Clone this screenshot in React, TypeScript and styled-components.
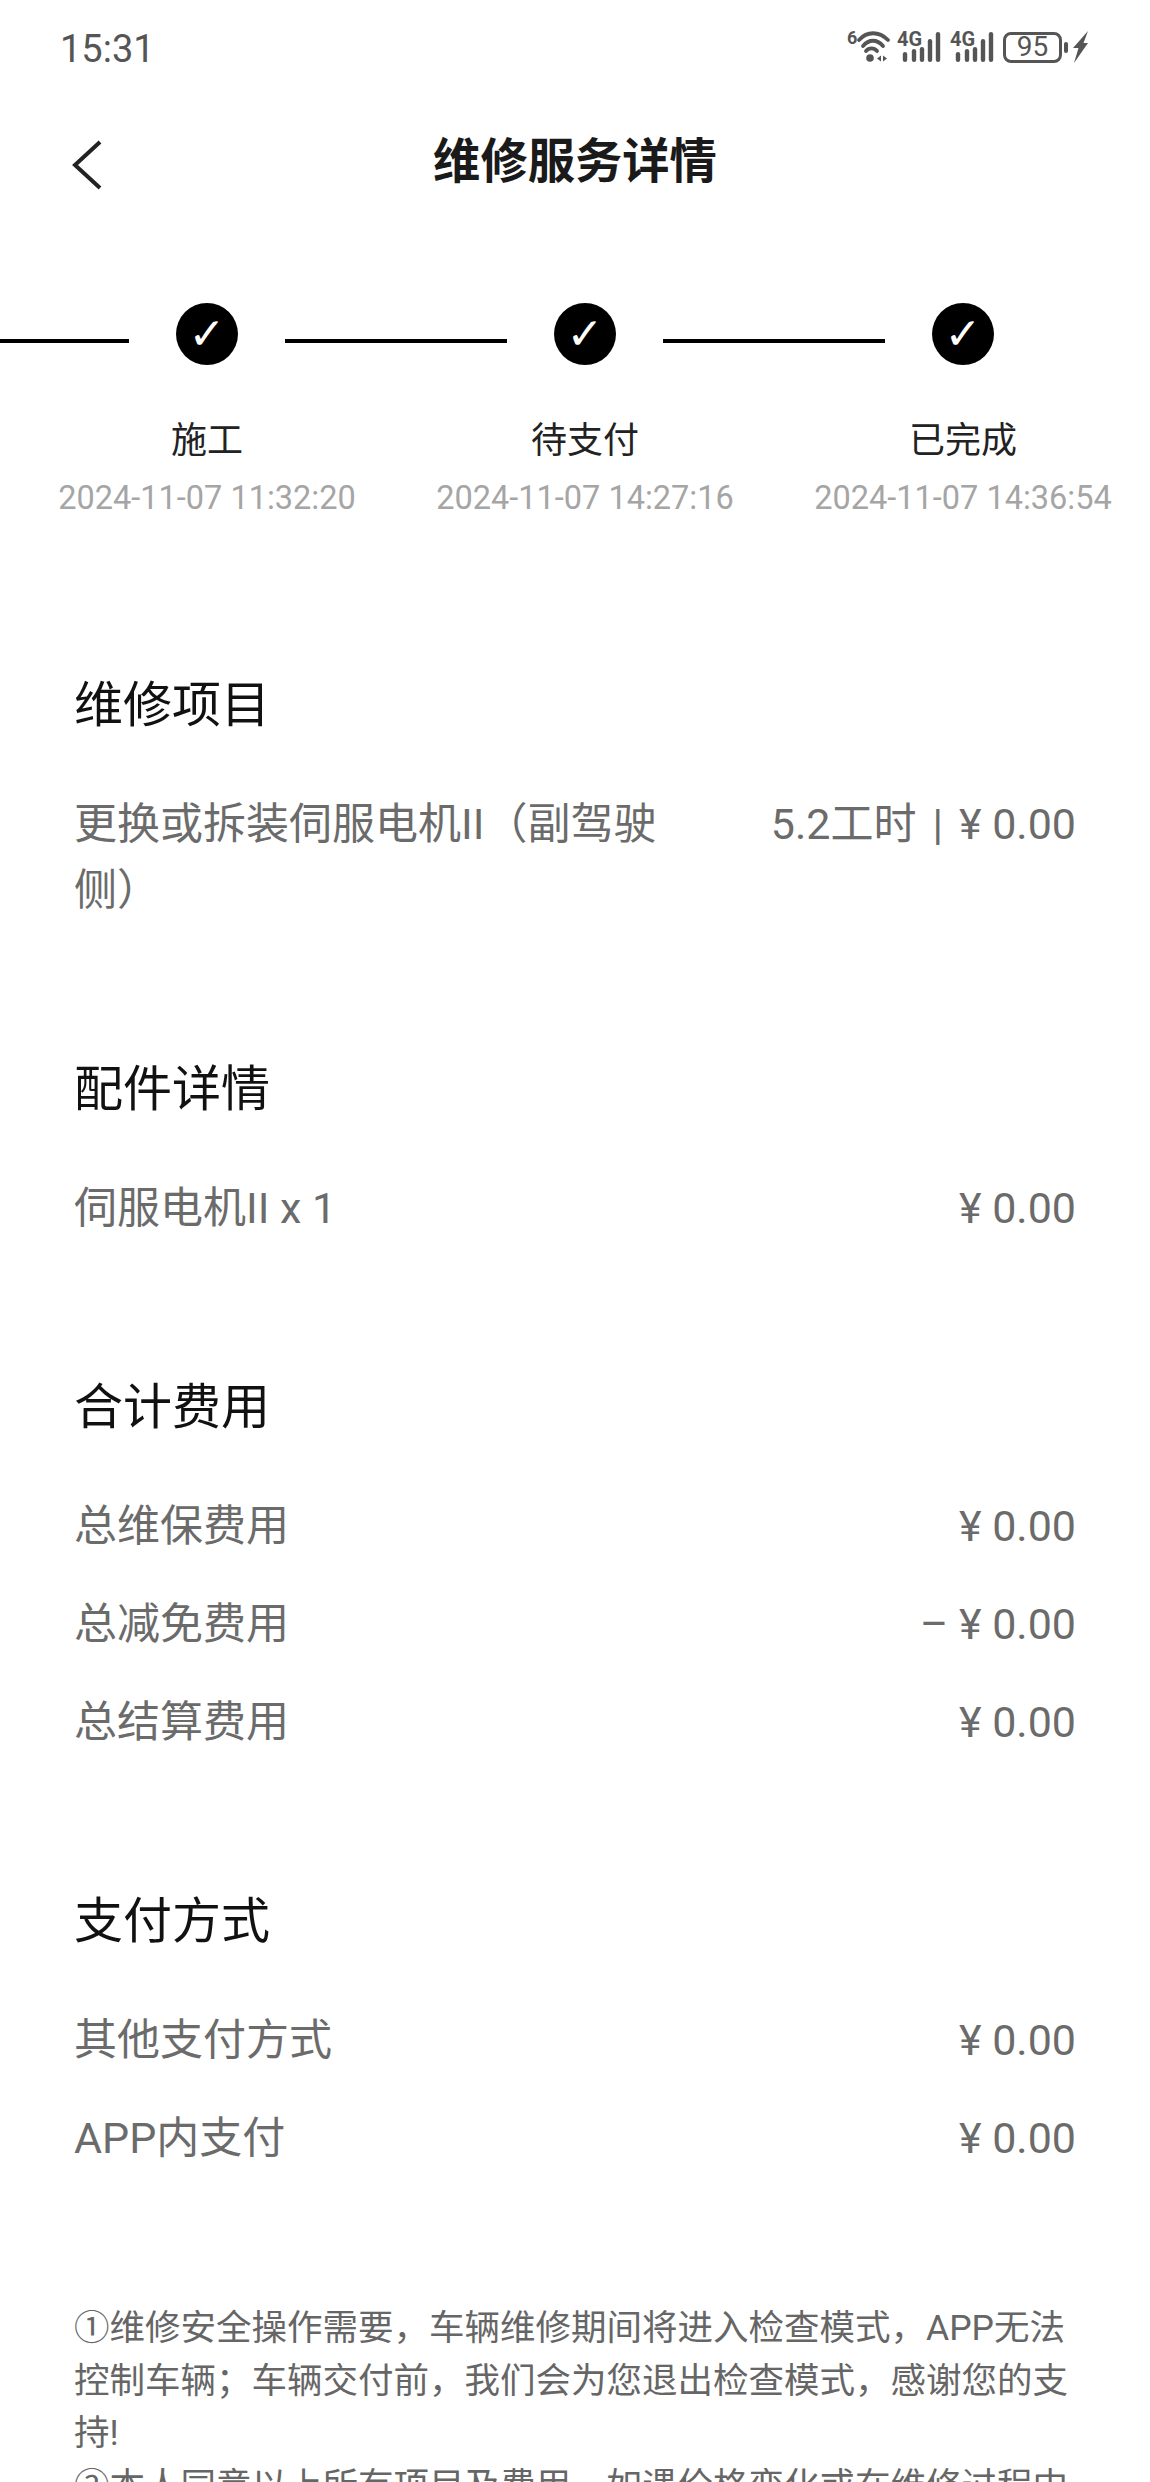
import React from 'react';
import styled, { createGlobalStyle } from 'styled-components';

const GlobalStyle = createGlobalStyle`
  html, body { margin: 0; padding: 0; background: #fff; }
  * { box-sizing: border-box; }
`;

const Page = styled.div`
  width: 1150px;
  height: 2482px;
  overflow: hidden;
  background: #fff;
  font-family: Roboto, "Noto Sans CJK SC", sans-serif;
`;

const StatusBar = styled.div`
  height: 94px;
  padding: 0 62px 0 60px;
  display: flex;
  align-items: center;
  justify-content: space-between;
  color: #555;
`;

const Clock = styled.span`
  font-size: 38px;
  padding-top: 3px;
`;

const StatusIcons = styled.div`
  display: flex;
  align-items: center;
  gap: 9px;
`;

const WifiSvg = styled.svg`
  margin: -6px -3px 0 0;
`;

const SignalSvg = styled.svg`
  margin-top: -6px;
`;

const BatteryBody = styled.div`
  width: 59px;
  height: 31px;
  border: 3px solid #555;
  border-radius: 8px;
  display: flex;
  align-items: center;
  justify-content: center;
  font-size: 28px;
  line-height: 1;
  color: #555;
`;

const BatteryTip = styled.div`
  width: 4px;
  height: 11px;
  margin-left: -7px;
  border-radius: 2px;
  background: #555;
`;

const BoltSvg = styled.svg`
  margin-left: -4px;
`;

const NavBar = styled.div`
  height: 136px;
  padding-left: 71px;
  display: grid;
  grid-template-columns: 40px 1fr 111px;
  align-items: center;
`;

const BackSvg = styled.svg`
  margin-top: 6px;
`;

const Title = styled.h1`
  margin: -10px 0 0;
  text-align: center;
  font-size: 47.3px;
  font-weight: 700;
  color: #1a1a1a;
`;

const Track = styled.div`
  margin-top: 73px;
  display: flex;
  align-items: center;
  gap: 47px;
`;

const Line = styled.div<{ $w: number }>`
  width: ${({ $w }) => $w}px;
  height: 4px;
  margin-top: 14px;
  flex-shrink: 0;
  background: #000;
`;

const Dot = styled.div`
  width: 62px;
  height: 62px;
  flex-shrink: 0;
  border-radius: 50%;
  background: #000;
  color: #fff;
  display: flex;
  align-items: center;
  justify-content: center;
  font-family: "DejaVu Sans", sans-serif;
  font-size: 44px;
  line-height: 1;
`;

const Steps = styled.div`
  margin-top: 51px;
  padding-left: 18px;
  display: flex;
  white-space: nowrap;
`;

const Step = styled.div`
  width: 378px;
  flex-shrink: 0;
  display: flex;
  flex-direction: column;
  align-items: center;
  gap: 12px;
`;

const StepName = styled.div`
  font-size: 36px;
  line-height: 50px;
  color: #222;
`;

const StepTime = styled.div`
  font-size: 32.5px;
  line-height: 40px;
  color: #a5a5a5;
`;

const Content = styled.div`
  margin-top: 158px;
  padding: 0 74px;
`;

const Section = styled.section`
  margin-bottom: 137px;
  &:last-of-type { margin-bottom: 131px; }
`;

const Heading = styled.h2`
  margin: 0 0 55px;
  font-size: 49px;
  line-height: 60px;
  font-weight: 400;
  color: #111;
`;

const Rows = styled.div`
  display: flex;
  flex-direction: column;
  gap: 32px;
`;

const Row = styled.div`
  display: flex;
  justify-content: space-between;
  gap: 90px;
  font-size: 43px;
  line-height: 66px;
  color: #6b6b6b;
`;

const Value = styled.span`
  flex-shrink: 0;
  white-space: nowrap;
`;

const Sep = styled.span`
  margin: 0 16px;
`;

const Notes = styled.div`
  font-size: 35.5px;
  line-height: 52.5px;
  color: #666;
`;

const Note = styled.p`
  margin: 0;
`;

const WifiIcon = () => (
  <WifiSvg width="44" height="40" viewBox="0 -6 44 40" fill="none">
    <text x="0" y="14" fontSize="18" fontWeight="700" fill="#555" fontFamily="Roboto, sans-serif">6</text>
    <path d="M12 10C20 1 32 1 41 10" stroke="#555" strokeWidth="3.8" strokeLinecap="round" />
    <path d="M16 16C22 9 30 9 36 16" stroke="#555" strokeWidth="3.8" strokeLinecap="round" />
    <path d="M19 21C22 17.500 27 17.500 30 21" stroke="#555" strokeWidth="3.8" strokeLinecap="round" />
    <circle cx="23" cy="28" r="3.8" fill="#555" />
    <path d="M34 25.500L30 28.500L34 31.500ZM36 25.500L40 28.500L36 31.500Z" fill="#555" />
  </WifiSvg>
);

const BARS = [[8, 21], [17, 18], [25, 16], [33, 8], [41, 1]];

const SignalIcon = () => (
  <SignalSvg width="44" height="39" viewBox="0 -6 44 39">
    <text x="0" y="15" fontSize="20" fontWeight="700" fill="#555" fontFamily="Roboto, sans-serif">4G</text>
    {BARS.map(([x, y]) => (
      <rect key={x} x={x - 2.2} y={y} width="4.4" height={31 - y} rx="2.2" fill="#555" />
    ))}
  </SignalSvg>
);

const BoltIcon = () => (
  <BoltSvg width="15" height="32" viewBox="0 0 15 32">
    <path d="M15 0L0 17H5.500L1 32L15 12H10.500L15 0Z" fill="#555" />
  </BoltSvg>
);

const BackIcon = () => (
  <BackSvg width="32" height="50" viewBox="0 0 32 50" fill="none">
    <path d="M29 2L4 25L29 48" stroke="#222" strokeWidth="4" />
  </BackSvg>
);

const STEPS = [
  { name: '施工', time: '2024-11-07 11:32:20' },
  { name: '待支付', time: '2024-11-07 14:27:16' },
  { name: '已完成', time: '2024-11-07 14:36:54' },
];

const SECTIONS: { title: string; rows: [string, React.ReactNode][] }[] = [
  {
    title: '维修项目',
    rows: [['更换或拆装伺服电机II（副驾驶侧）', <>5.2工时<Sep>|</Sep>¥ 0.00</>]],
  },
  { title: '配件详情', rows: [['伺服电机II x 1', '¥ 0.00']] },
  {
    title: '合计费用',
    rows: [['总维保费用', '¥ 0.00'], ['总减免费用', '– ¥ 0.00'], ['总结算费用', '¥ 0.00']],
  },
  { title: '支付方式', rows: [['其他支付方式', '¥ 0.00'], ['APP内支付', '¥ 0.00']] },
];

const App: React.FC = () => (
  <Page>
    <GlobalStyle />
    <StatusBar>
      <Clock>15:31</Clock>
      <StatusIcons>
        <WifiIcon />
        <SignalIcon />
        <SignalIcon />
        <BatteryBody>95</BatteryBody>
        <BatteryTip />
        <BoltIcon />
      </StatusIcons>
    </StatusBar>

    <NavBar>
      <BackIcon />
      <Title>维修服务详情</Title>
    </NavBar>

    <Track>
      <Line $w={129} />
      <Dot>✓</Dot>
      <Line $w={222} />
      <Dot>✓</Dot>
      <Line $w={222} />
      <Dot>✓</Dot>
    </Track>

    <Steps>
      {STEPS.map(s => (
        <Step key={s.name}>
          <StepName>{s.name}</StepName>
          <StepTime>{s.time}</StepTime>
        </Step>
      ))}
    </Steps>

    <Content>
      {SECTIONS.map(sec => (
        <Section key={sec.title}>
          <Heading>{sec.title}</Heading>
          <Rows>
            {sec.rows.map(([label, value]) => (
              <Row key={label}>
                <span>{label}</span>
                <Value>{value}</Value>
              </Row>
            ))}
          </Rows>
        </Section>
      ))}
      <Notes>
        <Note>①维修安全操作需要，车辆维修期间将进入检查模式，APP无法控制车辆；车辆交付前，我们会为您退出检查模式，感谢您的支持!</Note>
        <Note>②本人同意以上所有项目及费用，如遇价格变化或在维修过程中</Note>
      </Notes>
    </Content>
  </Page>
);

export default App;
